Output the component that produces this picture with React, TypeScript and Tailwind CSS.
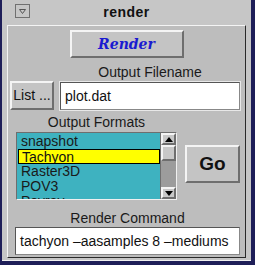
import React from "react";

const sans = "font-['Liberation_Sans',Arial,sans-serif]";

const raised =
  "border-2 border-t-[#f4f4f4] border-l-[#f4f4f4] border-r-[#6e6e6e] border-b-[#6e6e6e]";
const sunken =
  "border-2 border-t-[#6e6e6e] border-l-[#6e6e6e] border-r-[#f0f0f0] border-b-[#f0f0f0]";

const formats = ["snapshot", "Tachyon", "Raster3D", "POV3", "Povray"];

const Arrow: React.FC<{ up?: boolean }> = ({ up }) => (
  <div
    className={`h-[12px] bg-[#c8c8c8] flex items-center justify-center ${raised}`}
  >
    <svg width="8" height="5" viewBox="0 0 8 5">
      <path d={up ? "M0 5 L4 0 L8 5 Z" : "M0 0 L4 5 L8 0 Z"} fill="#000" />
    </svg>
  </div>
);

const App: React.FC = () => {
  return (
    <div className={`w-[255px] h-[265px] bg-[#1e1e58] pl-[2px] pr-[4px] pb-[4px] ${sans}`}>
      <div className="h-full bg-[#c6c6c6] flex flex-col border-b border-b-[#f0f0f0]">
        {/* title bar */}
        <div className="relative h-[25px] flex items-center justify-center">
          <div className="absolute left-[13px] top-[4px] w-[15px] h-[14px] border border-[#707070] flex items-center justify-center">
            <svg width="7" height="5" viewBox="0 0 7 5">
              <path d="M0.5 0.5 L6.5 0.5 L3.5 4.5 Z" fill="none" stroke="#555" strokeWidth="1" />
            </svg>
          </div>
          <span className="text-[14px] font-bold text-[#111] tracking-[0.5px] leading-none mt-[-1px]">
            render
          </span>
        </div>

        {/* body */}
        <div className="mx-[5px] h-[233px] bg-[#bdbdbd] border border-t-[#f4f4f4] border-l-[#f4f4f4] border-r-[#2a2a2a] border-b-[#2a2a2a] flex flex-col">
          <div className="flex justify-center mt-[4px]">
            <button
              className={`w-[114px] h-[28px] bg-[#c4c4c4] ${raised} text-[14px] font-bold italic text-[#1a1ad0] font-['DejaVu_Serif',serif]`}
            >
              Render
            </button>
          </div>

          <div className="flex items-end ml-[2px] mt-[6px]">
            <button
              className={`w-[44px] h-[29px] bg-[#c4c4c4] ${raised} text-[14px] text-[#111] ${sans}`}
            >
              List ...
            </button>
            <div className="flex flex-col ml-[6px]">
              <span className="text-[14px] leading-[16px] text-[#1a1a1a] text-center mb-[2px]">
                Output Filename
              </span>
              <div
                className={`w-[180px] h-[28px] bg-white border border-t-[#555] border-l-[#555] border-r-[#888] border-b-[#888] outline outline-1 outline-[#e8e8e8] flex items-center pl-[4px] text-[14px] text-[#111]`}
              >
                plot.dat
              </div>
            </div>
          </div>

          <div className="flex items-center ml-[8px] mt-[4px]">
            <div className="flex flex-col">
              <span className="text-[14px] leading-[16px] text-[#1a1a1a] text-center mb-[2px]">
                Output Formats
              </span>
              <div className={`w-[161px] h-[68px] flex ${sunken} border-[1px] bg-[#3eb2c0]`}>
                <div className="flex-1 overflow-hidden pt-[1px] pl-[1px]">
                  {formats.map((f) => (
                    <div
                      key={f}
                      className={`h-[15px] leading-[15px] text-[14px] pl-[3px] overflow-hidden ${
                        f === "Tachyon"
                          ? "bg-[#ffff00] border border-black pl-[2px] leading-[13px] text-[#111]"
                          : "text-[#1a1a1a]"
                      }`}
                    >
                      {f}
                    </div>
                  ))}
                </div>
                <div className="w-[16px] bg-[#9c9c9c] flex flex-col border-l border-[#6e6e6e]">
                  <Arrow up />
                  <div className={`h-[16px] bg-[#c8c8c8] ${raised}`} />
                  <div className="flex-1" />
                  <Arrow />
                </div>
              </div>
            </div>
            <button
              className={`ml-[8px] mt-[14px] w-[55px] h-[38px] bg-[#c4c4c4] ${raised} text-[19px] font-bold text-[#111]`}
            >
              Go
            </button>
          </div>

          <span className="text-[14px] leading-[16px] text-[#1a1a1a] text-center mt-[10px] ml-[2px]">
            Render Command
          </span>
          <div className="ml-[7px] mt-[1px] w-[225px] h-[28px] bg-white border border-t-[#555] border-l-[#555] border-r-[#888] border-b-[#888] flex items-center pl-[4px] text-[14px] text-[#111] whitespace-nowrap overflow-hidden">
            tachyon –aasamples 8 –mediums
          </div>
        </div>
      </div>
    </div>
  );
};

export default App;
